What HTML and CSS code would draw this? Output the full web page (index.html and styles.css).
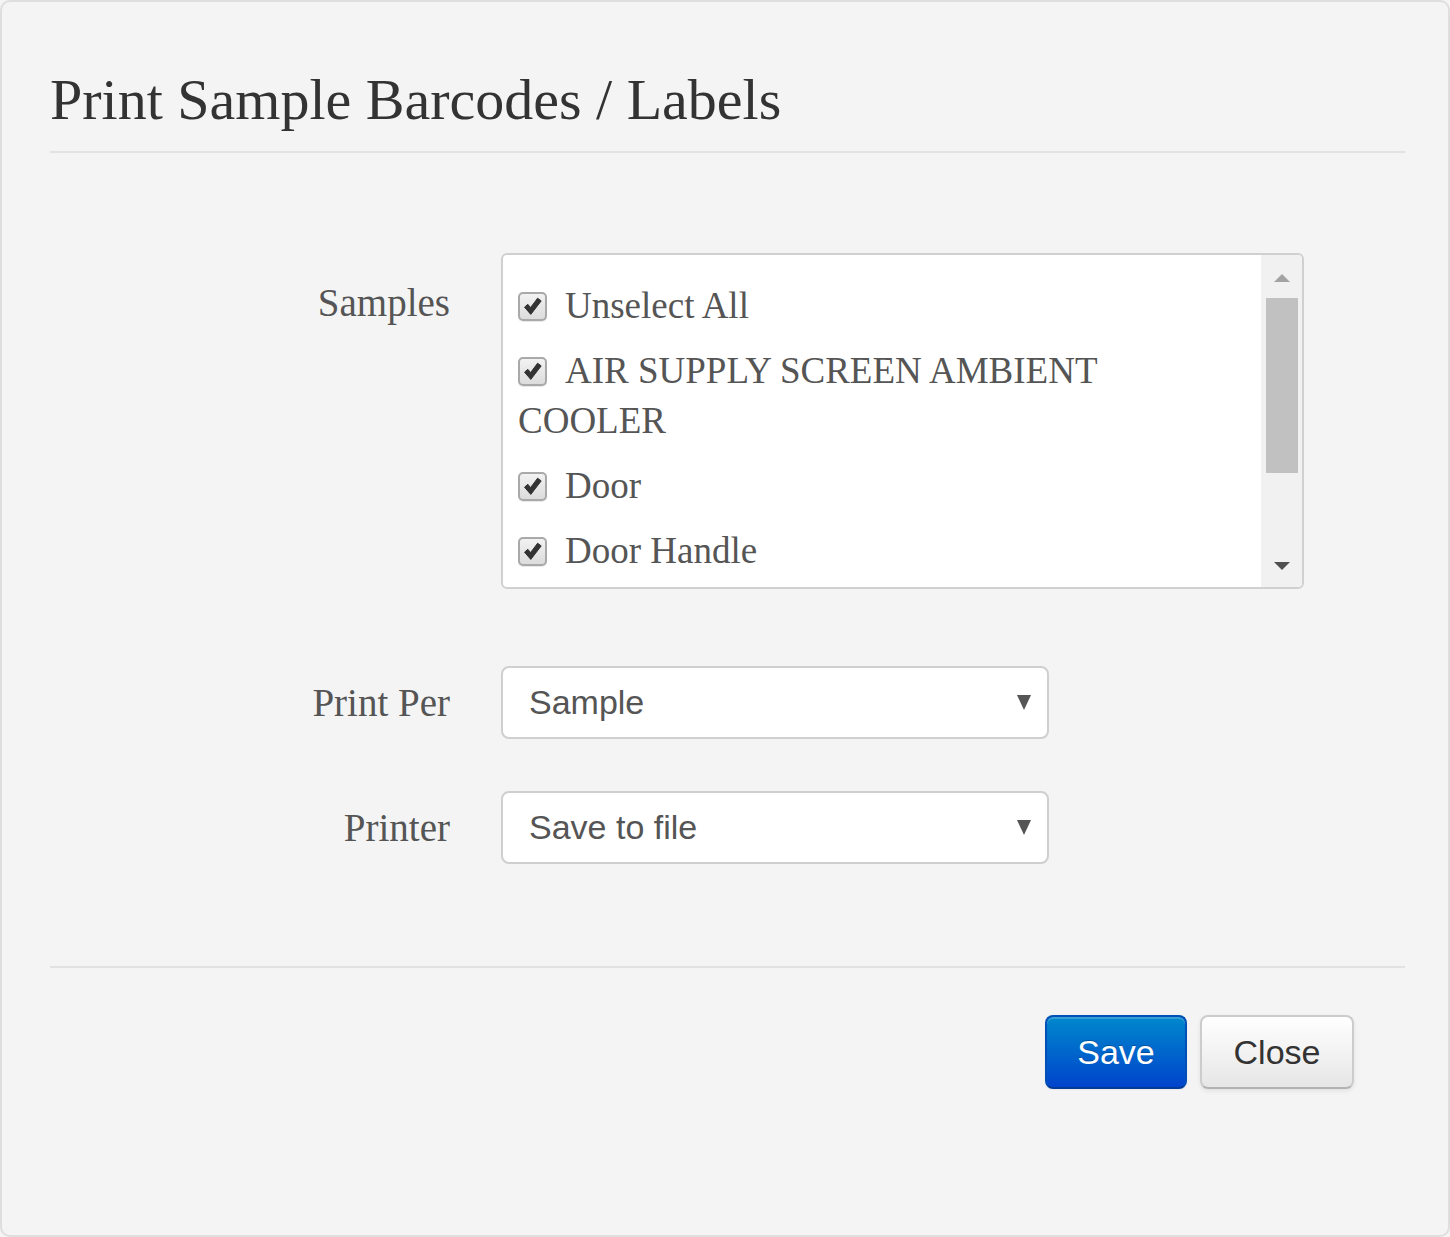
FILE: index.html
```html
<!DOCTYPE html>
<html lang="en">
<head>
<meta charset="utf-8">
<title>Print Sample Barcodes / Labels</title>
<link rel="stylesheet" href="styles.css">
</head>
<body>
<div class="modal">
  <div class="modal-header">
    <h3 class="modal-title">Print Sample Barcodes / Labels</h3>
  </div>
  <div class="modal-body">
    <div class="form-row form-row-top">
      <div class="form-label">Samples</div>
      <div class="listbox">
        <div class="list-items">
          <label class="item"><span class="check"><svg viewBox="0 0 29 29" width="29" height="29"><path d="M6.5 15.2 L9.8 12.3 L12.6 15.6 L19.6 6.2 L23.2 8.9 L12.8 22.4 Z" fill="#333" stroke="#333" stroke-width="1" stroke-linejoin="round"/></svg></span><span class="item-text">Unselect All</span></label>
          <label class="item"><span class="check"><svg viewBox="0 0 29 29" width="29" height="29"><path d="M6.5 15.2 L9.8 12.3 L12.6 15.6 L19.6 6.2 L23.2 8.9 L12.8 22.4 Z" fill="#333" stroke="#333" stroke-width="1" stroke-linejoin="round"/></svg></span><span class="item-text">AIR SUPPLY SCREEN AMBIENT COOLER</span></label>
          <label class="item"><span class="check"><svg viewBox="0 0 29 29" width="29" height="29"><path d="M6.5 15.2 L9.8 12.3 L12.6 15.6 L19.6 6.2 L23.2 8.9 L12.8 22.4 Z" fill="#333" stroke="#333" stroke-width="1" stroke-linejoin="round"/></svg></span><span class="item-text">Door</span></label>
          <label class="item"><span class="check"><svg viewBox="0 0 29 29" width="29" height="29"><path d="M6.5 15.2 L9.8 12.3 L12.6 15.6 L19.6 6.2 L23.2 8.9 L12.8 22.4 Z" fill="#333" stroke="#333" stroke-width="1" stroke-linejoin="round"/></svg></span><span class="item-text">Door Handle</span></label>
        </div>
        <div class="scrollbar">
          <span class="arrow-up"></span>
          <div class="scroll-track"><div class="scroll-thumb"></div></div>
          <span class="arrow-down"></span>
        </div>
      </div>
    </div>
    <div class="form-row">
      <div class="form-label">Print Per</div>
      <div class="select"><span class="select-value">Sample</span><span class="caret"></span></div>
    </div>
    <div class="form-row">
      <div class="form-label">Printer</div>
      <div class="select"><span class="select-value">Save to file</span><span class="caret"></span></div>
    </div>
  </div>
  <div class="modal-footer">
    <button class="btn btn-primary" type="button">Save</button>
    <button class="btn btn-default" type="button">Close</button>
  </div>
</div>
</body>
</html>
```

FILE: styles.css
```css
* { box-sizing: border-box; }
html, body { margin: 0; padding: 0; background: #f4f4f4; }
body { width: 1450px; height: 1237px; overflow: hidden; }

.modal {
  width: 1450px;
  height: 1237px;
  background: #f4f4f4;
  border: 2px solid #dedede;
  border-radius: 10px;
  display: flex;
  flex-direction: column;
  font-family: "Liberation Serif", "Times New Roman", serif;
}

.modal-header {
  margin: 0 43px 0 48px;
  padding: 68px 0 22px;
  border-bottom: 2px solid #e2e2e2;
}
.modal-title {
  margin: 0;
  font-weight: normal;
  font-size: 58px;
  line-height: 59px;
  color: #333;
}

.modal-body {
  padding: 100px 0 102px;
  border-bottom: 2px solid #e2e2e2;
  margin: 0 43px 0 48px;
}

.form-row {
  display: flex;
  align-items: center;
  margin-bottom: 52px;
}
.form-row:last-child { margin-bottom: 0; }
.form-row-top { align-items: flex-start; margin-bottom: 77px; }

.form-label {
  width: 400px;
  flex: none;
  text-align: right;
  font-size: 39px;
  line-height: 50px;
  color: #555;
  margin-right: 51px;
}
.form-row-top .form-label { padding-top: 25px; }

.listbox {
  width: 803px;
  height: 336px;
  background: #fff;
  border: 2px solid #d0d0d0;
  border-radius: 6px;
  display: flex;
  overflow: hidden;
}
.list-items {
  flex: 1;
  padding: 26px 40px 0 15px;
  overflow: hidden;
}
.item {
  display: block;
  font-size: 37px;
  line-height: 50px;
  color: #555;
  margin-bottom: 15px;
}
.check {
  display: inline-block;
  width: 29px;
  height: 29px;
  vertical-align: -3px;
  margin-right: 18px;
  border: 2px solid #a9a9a9;
  border-radius: 5px;
  background: linear-gradient(#f2f2f2, #dcdcdc);
  box-shadow: 0 1px 0 #e8e8e8;
  position: relative;
}
.check svg {
  position: absolute;
  left: -2px;
  top: -2px;
}

.scrollbar {
  width: 41px;
  flex: none;
  background: #f1f1f1;
  display: flex;
  flex-direction: column;
  align-items: center;
  padding: 19px 0 17px;
}
.arrow-up {
  width: 0; height: 0;
  border-left: 8px solid transparent;
  border-right: 8px solid transparent;
  border-bottom: 8px solid #a3a3a3;
}
.scroll-track {
  flex: 1;
  width: 100%;
  padding: 16px 4px 0 5px;
}
.scroll-thumb {
  height: 175px;
  background: #c1c1c1;
}
.arrow-down {
  width: 0; height: 0;
  border-left: 8px solid transparent;
  border-right: 8px solid transparent;
  border-top: 8px solid #505050;
}

.select {
  width: 548px;
  height: 73px;
  background: #fff;
  border: 2px solid #cfcfcf;
  border-radius: 8px;
  display: flex;
  align-items: center;
  justify-content: space-between;
  padding: 0 16px 0 26px;
  font-family: "Liberation Sans", Arial, sans-serif;
  font-size: 34px;
  color: #555;
}
.caret {
  width: 0; height: 0;
  border-left: 7px solid transparent;
  border-right: 7px solid transparent;
  border-top: 15px solid #555;
  margin-top: -1px;
}

.modal-footer {
  margin: 0 43px 0 48px;
  padding: 47px 51px 0 0;
  display: flex;
  justify-content: flex-end;
  gap: 13px;
}
.btn {
  height: 74px;
  border-radius: 8px;
  font-family: "Liberation Sans", Arial, sans-serif;
  font-size: 34px;
  padding: 0;
  cursor: pointer;
}
.btn-primary {
  width: 142px;
  color: #fff;
  background: linear-gradient(#0088cc, #0044cc);
  border: 2px solid #0050b8;
  border-bottom-color: #003a99;
  text-shadow: 0 -1px 0 rgba(0,0,0,0.25);
  box-shadow: inset 0 2px 0 rgba(255,255,255,0.2), 0 1px 2px rgba(0,0,0,0.05);
}
.btn-default {
  width: 154px;
  color: #333;
  background: linear-gradient(#ffffff, #e6e6e6);
  border: 2px solid #cccccc;
  border-bottom-color: #b3b3b3;
  box-shadow: inset 0 2px 0 rgba(255,255,255,0.2), 0 2px 4px rgba(0,0,0,0.08);
}
```
